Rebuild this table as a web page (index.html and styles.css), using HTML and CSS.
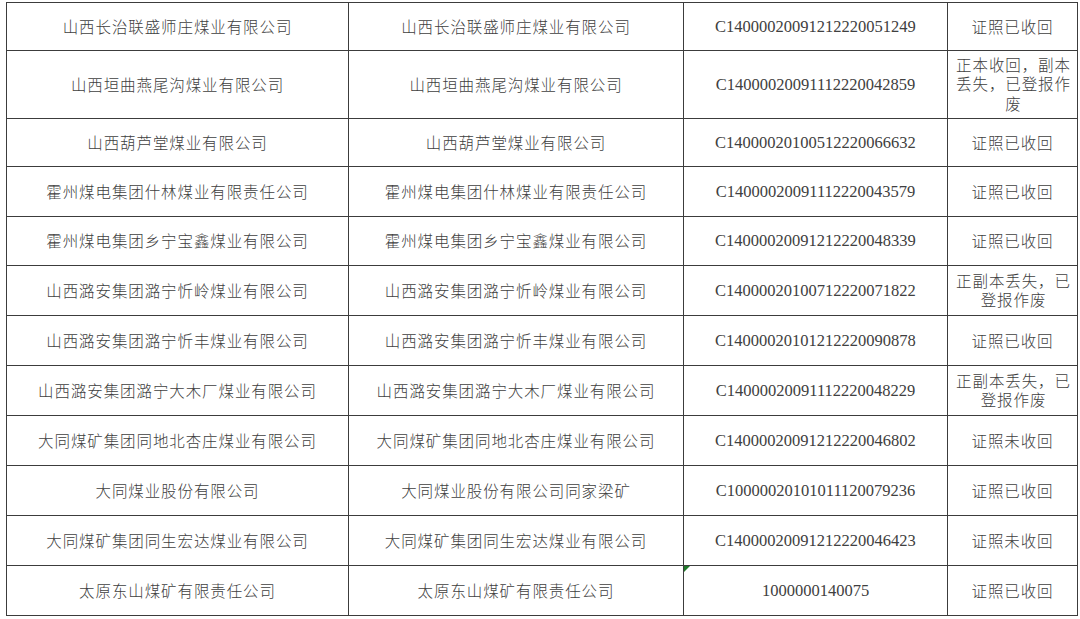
FILE: index.html
```html
<!DOCTYPE html>
<html lang="zh-CN">
<head>
<meta charset="utf-8">
<title>煤矿证照收回情况</title>
<link rel="stylesheet" href="styles.css">
</head>
<body>
<table class="sheet">
  <colgroup>
    <col class="c1"><col class="c2"><col class="c3"><col class="c4">
  </colgroup>
  <tbody>
    <tr class="r48"><td>山西长治联盛师庄煤业有限公司</td><td>山西长治联盛师庄煤业有限公司</td><td class="num">C14000020091212220051249</td><td>证照已收回</td></tr>
    <tr class="r68"><td>山西垣曲燕尾沟煤业有限公司</td><td>山西垣曲燕尾沟煤业有限公司</td><td class="num">C14000020091112220042859</td><td class="wrap">正本收回，副本丢失，已登报作废</td></tr>
    <tr class="r48"><td>山西葫芦堂煤业有限公司</td><td>山西葫芦堂煤业有限公司</td><td class="num">C14000020100512220066632</td><td>证照已收回</td></tr>
    <tr class="r50"><td>霍州煤电集团什林煤业有限责任公司</td><td>霍州煤电集团什林煤业有限责任公司</td><td class="num">C14000020091112220043579</td><td>证照已收回</td></tr>
    <tr class="r49"><td>霍州煤电集团乡宁宝鑫煤业有限公司</td><td>霍州煤电集团乡宁宝鑫煤业有限公司</td><td class="num">C14000020091212220048339</td><td>证照已收回</td></tr>
    <tr class="r50"><td>山西潞安集团潞宁忻岭煤业有限公司</td><td>山西潞安集团潞宁忻岭煤业有限公司</td><td class="num">C14000020100712220071822</td><td class="wrap">正副本丢失，已登报作废</td></tr>
    <tr class="r50"><td>山西潞安集团潞宁忻丰煤业有限公司</td><td>山西潞安集团潞宁忻丰煤业有限公司</td><td class="num">C14000020101212220090878</td><td>证照已收回</td></tr>
    <tr class="r50"><td>山西潞安集团潞宁大木厂煤业有限公司</td><td>山西潞安集团潞宁大木厂煤业有限公司</td><td class="num">C14000020091112220048229</td><td class="wrap">正副本丢失，已登报作废</td></tr>
    <tr class="r50"><td>大同煤矿集团同地北杏庄煤业有限公司</td><td>大同煤矿集团同地北杏庄煤业有限公司</td><td class="num">C14000020091212220046802</td><td>证照未收回</td></tr>
    <tr class="r50"><td>大同煤业股份有限公司</td><td>大同煤业股份有限公司同家梁矿</td><td class="num">C10000020101011120079236</td><td>证照已收回</td></tr>
    <tr class="r50"><td>大同煤矿集团同生宏达煤业有限公司</td><td>大同煤矿集团同生宏达煤业有限公司</td><td class="num">C14000020091212220046423</td><td>证照未收回</td></tr>
    <tr class="r50"><td>太原东山煤矿有限责任公司</td><td>太原东山煤矿有限责任公司</td><td class="num flag">1000000140075</td><td>证照已收回</td></tr>
  </tbody>
</table>
</body>
</html>
```

FILE: styles.css
```css
html, body {
  margin: 0;
  padding: 0;
  background: #ffffff;
}

body {
  padding: 2px 0 0 6px;
  font-family: "Noto Sans CJK SC", "Noto Sans", sans-serif;
  color: #404040;
}

.sheet {
  border-collapse: collapse;
  table-layout: fixed;
  width: 1071px;
}

.c1 { width: 342px; }
.c2 { width: 335px; }
.c3 { width: 264px; }
.c4 { width: 130px; }

.sheet td {
  border: 1px solid #3c3c3c;
  text-align: center;
  vertical-align: middle;
  padding: 0 4px 1px;
  font-size: 15.5px;
  font-weight: 300;
  letter-spacing: 0.9px;
  line-height: 19px;
  white-space: nowrap;
  overflow: hidden;
}

.sheet td.wrap {
  white-space: normal;
  padding: 0 5px 1px 7px;
  line-height: 19.5px;
}

.sheet td.num {
  font-family: "Liberation Serif", "DejaVu Serif", serif;
  font-size: 16.5px;
  font-weight: 400;
  letter-spacing: 0;
  position: relative;
}

.sheet td.flag::before {
  content: "";
  position: absolute;
  left: 0;
  top: 0;
  width: 0;
  height: 0;
  border-top: 6px solid #1f7a2a;
  border-right: 6px solid transparent;
}

.r48 { height: 48px; }
.r49 { height: 49px; }
.r50 { height: 50px; }
.r68 { height: 68px; }
```
